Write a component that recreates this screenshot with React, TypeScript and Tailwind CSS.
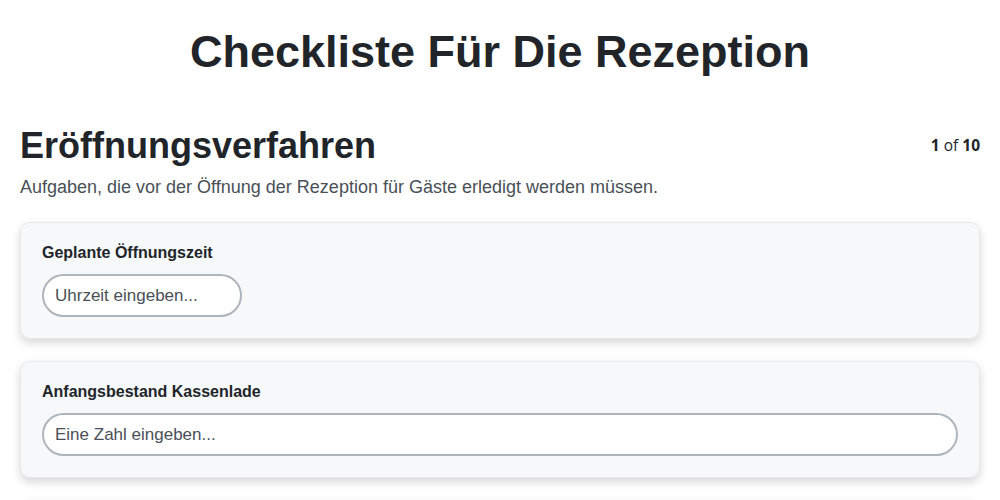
import React from "react";

export default function App() {
  return (
    <div className="min-h-screen bg-white px-5 pt-[25px] text-[#212529]" style={{ fontFamily: '"Liberation Sans", Arial, sans-serif' }}>
      <h1 className="text-center text-[45px] font-bold leading-[54px]">Checkliste Für Die Rezeption</h1>
      <div className="mt-[45px] flex items-start justify-between">
        <h2 className="text-[36px] font-bold leading-[43px]">Eröffnungsverfahren</h2>
        <div className="mt-[9px] text-[15.5px] leading-6" style={{ fontFamily: '"Open Sans", sans-serif' }}>
          <span className="font-bold">1</span> of <span className="font-bold">10</span>
        </div>
      </div>
      <p className="mt-[7px] text-[18px] leading-[27px] text-[#495057]">
        Aufgaben, die vor der Öffnung der Rezeption für Gäste erledigt werden müssen.
      </p>
      <div className="mt-[21px] flex flex-col gap-[22px] pb-10">
        <div className="rounded-[10px] border border-[#e6e8ec] bg-[#f7f8fa] px-[21px] pt-[18px] pb-[21px] shadow-[0_4px_10px_rgba(0,0,0,0.16)]">
          <label className="block text-[16px] font-bold leading-6">Geplante Öffnungszeit</label>
          <input
            placeholder="Uhrzeit eingeben..."
            className="mt-[9px] h-[43px] w-[200px] rounded-full border-2 border-[#adb5bd] bg-white px-[11px] text-[17px] text-[#212529] outline-none placeholder:text-[#495057]"
          />
        </div>
        <div className="rounded-[10px] border border-[#e6e8ec] bg-[#f7f8fa] px-[21px] pt-[18px] pb-[21px] shadow-[0_4px_10px_rgba(0,0,0,0.16)]">
          <label className="block text-[16px] font-bold leading-6">Anfangsbestand Kassenlade</label>
          <input
            placeholder="Eine Zahl eingeben..."
            className="mt-[9px] h-[43px] w-full rounded-full border-2 border-[#adb5bd] bg-white px-[11px] text-[17px] text-[#212529] outline-none placeholder:text-[#495057]"
          />
        </div>
        <div className="h-[116px] rounded-[10px] border border-[#e6e8ec] bg-[#f7f8fa] shadow-[0_4px_10px_rgba(0,0,0,0.16)]" />
      </div>
    </div>
  );
}
